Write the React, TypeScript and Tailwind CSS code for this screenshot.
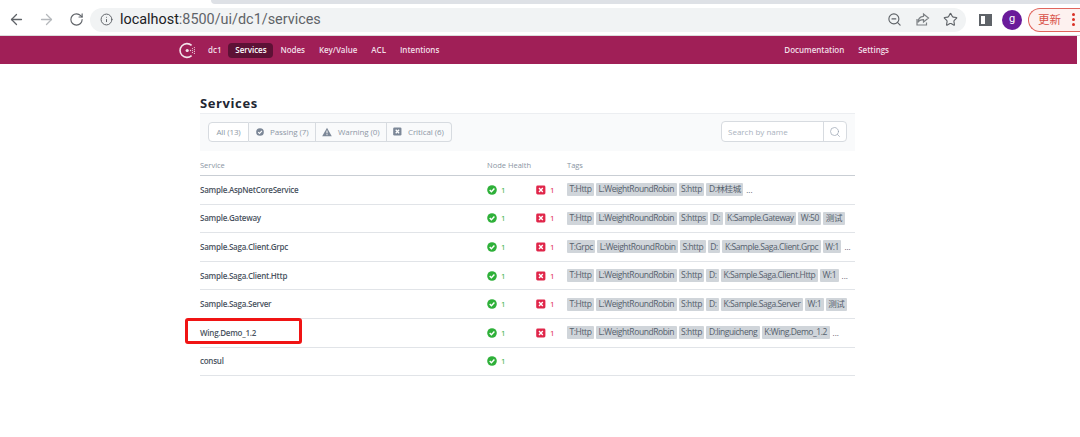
import { ArrowLeft, ArrowRight, RotateCw, Info, ZoomOut, Star, Search } from "lucide-react";

const font = { fontFamily: '"Open Sans","Noto Sans CJK SC",sans-serif' };

function PassIcon({ color = "#2eb039", size = 10 }: { color?: string; size?: number }) {
  return (
    <svg width={size} height={size} viewBox="0 0 10 10" className="shrink-0">
      <circle cx="5" cy="5" r="4.8" fill={color} />
      <path d="M2.7 5.1 4.4 6.8 7.4 3.6" fill="none" stroke="#fff" strokeWidth="1.4" />
    </svg>
  );
}

function CritIcon({ color = "#e0264a", size = 10 }: { color?: string; size?: number }) {
  return (
    <svg width={size} height={size} viewBox="0 0 10 10" className="shrink-0">
      <rect x="0.2" y="0.5" width="9.2" height="9" rx="1.4" fill={color} />
      <path d="M3 3 6.8 7M6.8 3 3 7" fill="none" stroke="#fff" strokeWidth="1.4" />
    </svg>
  );
}

function WarnIcon() {
  return (
    <svg width="10" height="10" viewBox="0 0 10 10" className="shrink-0">
      <path d="M5 .8 9.8 9.2H.2Z" fill="#7c8797" />
      <path d="M5 3.6V6.4M5 7.2V8.2" stroke="#fff" strokeWidth="1" />
    </svg>
  );
}

function Logo() {
  return (
    <svg width="17" height="17" viewBox="0 0 17 17" className="shrink-0">
      <path d="M12.6 3.4A6.9 6.9 0 1 0 12.6 13.6" fill="none" stroke="#f3e3ea" strokeWidth="1.6" />
      <circle cx="8.2" cy="8.5" r="1.6" fill="#f3e3ea" />
      <g fill="#e6c6d4">
        <circle cx="11.5" cy="8.5" r=".7" />
        <circle cx="13.5" cy="6.6" r=".6" />
        <circle cx="13.5" cy="8.5" r=".6" />
        <circle cx="13.5" cy="10.4" r=".6" />
        <circle cx="15.4" cy="5.6" r=".6" />
        <circle cx="15.4" cy="7.6" r=".6" />
        <circle cx="15.4" cy="9.4" r=".6" />
        <circle cx="15.4" cy="11.4" r=".6" />
      </g>
    </svg>
  );
}

const rows: { name: string; crit: boolean; tags: string[]; more?: boolean }[] = [
  { name: "Sample.AspNetCoreService", crit: true, tags: ["T:Http", "L:WeightRoundRobin", "S:http", "D:林桂城"], more: true },
  { name: "Sample.Gateway", crit: true, tags: ["T:Http", "L:WeightRoundRobin", "S:https", "D:", "K:Sample.Gateway", "W:50", "测试"] },
  { name: "Sample.Saga.Client.Grpc", crit: true, tags: ["T:Grpc", "L:WeightRoundRobin", "S:http", "D:", "K:Sample.Saga.Client.Grpc", "W:1"], more: true },
  { name: "Sample.Saga.Client.Http", crit: true, tags: ["T:Http", "L:WeightRoundRobin", "S:http", "D:", "K:Sample.Saga.Client.Http", "W:1"], more: true },
  { name: "Sample.Saga.Server", crit: true, tags: ["T:Http", "L:WeightRoundRobin", "S:http", "D:", "K:Sample.Saga.Server", "W:1", "测试"] },
  { name: "Wing.Demo_1.2", crit: true, tags: ["T:Http", "L:WeightRoundRobin", "S:http", "D:linguicheng", "K:Wing.Demo_1.2"], more: true },
  { name: "consul", crit: false, tags: [] },
];

function Chrome() {
  return (
    <div className="relative h-9 pt-1 bg-white border-b border-[#dcdcdc] flex items-center text-[#5f6368]">
      <div className="absolute top-0 left-[211px] right-0 h-1 bg-[#dee1e6] rounded-bl-md" />
      <div className="flex items-center gap-[13px] pl-[8px] w-[90px] shrink-0">
        <ArrowLeft size={17} strokeWidth={1.8} />
        <ArrowRight size={17} strokeWidth={1.8} className="text-[#b5b8bc]" />
        <RotateCw size={15} strokeWidth={1.8} className="ml-[1px]" />
      </div>
      <div className="w-[876px] h-6 rounded-full bg-[#f1f3f4] flex items-center pl-[10px] pr-[8px] shrink-0">
        <Info size={13} strokeWidth={1.8} />
        <span className="ml-[7px] text-[14.4px] text-[#5f6368]" style={{ fontFamily: '"Roboto",sans-serif' }}>
          <span className="text-[#202124]">localhost</span>:8500/ui/dc1/services
        </span>
        <div className="ml-auto flex items-center gap-[13px]">
          <ZoomOut size={15} strokeWidth={1.8} />
          <svg width="15" height="15" viewBox="0 0 15 15" fill="none" stroke="#7c8084" strokeWidth="1.2">
            <path d="M8.5 2 13.5 6 8.5 10V7.6C5.5 7.6 3.8 8.6 2.8 10.6 3 7 5 4.6 8.5 4.3Z" />
            <path d="M2 7V13H11.5V10.5" />
          </svg>
          <Star size={15} strokeWidth={1.8} />
        </div>
      </div>
      <div className="ml-[13px] w-[13px] h-[12px] border-2 border-[#5f6368] flex justify-end shrink-0">
        <div className="w-[5px] h-full bg-[#5f6368]" />
      </div>
      <div className="ml-[10px] w-5 h-5 rounded-full bg-[#6a1b9a] text-white text-[11px] flex items-center justify-center shrink-0" style={{ fontFamily: '"Roboto",sans-serif' }}>
        g
      </div>
      <div className="ml-[6px] w-[60px] h-6 shrink-0 rounded-l-full border border-r-0 border-[#e0655c] bg-[#fdf1ef] flex items-center pl-[9px]">
        <span className="text-[11.5px] text-[#d9534a]" style={{ fontFamily: '"Noto Sans CJK SC",sans-serif' }}>更新</span>
        <span className="ml-[11px] flex flex-col gap-[2px]">
          <i className="block w-[3px] h-[3px] rounded-full bg-[#d93025]" />
          <i className="block w-[3px] h-[3px] rounded-full bg-[#d93025]" />
          <i className="block w-[3px] h-[3px] rounded-full bg-[#d93025]" />
        </span>
      </div>
    </div>
  );
}

function Nav() {
  const item = "text-[8px] font-semibold tracking-[-0.03px] text-[#f1dfe7]";
  return (
    <div className="h-7 w-[1077px] bg-[#a01f57] flex items-center pl-[179px] pr-[188px]">
      <Logo />
      <span className={`${item} ml-[12px]`}>dc1</span>
      <span className={`${item} ml-[7px] h-[15px] w-[45px] flex items-center justify-center rounded-sm bg-[#5d1135] text-white`}>Services</span>
      <span className={`${item} ml-[7px]`}>Nodes</span>
      <span className={`${item} ml-[14px]`}>Key/Value</span>
      <span className={`${item} ml-[14px]`}>ACL</span>
      <span className={`${item} ml-[14px]`}>Intentions</span>
      <span className={`${item} ml-auto`}>Documentation</span>
      <span className={`${item} ml-[14px]`}>Settings</span>
    </div>
  );
}

function FilterBar() {
  const seg = "h-[20px] flex items-center gap-[6px] border border-[#d7dbe0] text-[8px] tracking-[-0.1px] text-[#8e98a6]";
  return (
    <div className="h-[38px] pb-[2px] bg-[#f9fafb] border-t border-[#eceef1] flex items-center px-[8px]">
      <div className="flex">
        <span className={`${seg} w-[41px] justify-center rounded-l-sm bg-white text-[#7c8797]`}>All (13)</span>
        <span className={`${seg} w-[67px] pl-[7px] border-l-0`}><PassIcon color="#7c8797" size={8} />Passing (7)</span>
        <span className={`${seg} w-[71px] pl-[6px] border-l-0`}><WarnIcon />Warning (0)</span>
        <span className={`${seg} w-[65px] pl-[6px] border-l-0 rounded-r-sm`}><CritIcon color="#7c8797" size={9} />Critical (6)</span>
      </div>
      <div className="ml-auto flex h-[21px] w-[126px] bg-white border border-[#d7dbe0] rounded-sm">
        <span className="flex-1 text-[8px] text-[#a9b2bd] flex items-center pl-[6px]">Search by name</span>
        <span className="w-[23px] border-l border-[#d7dbe0] flex items-center justify-center">
          <Search size={12} strokeWidth={1.4} className="text-[#9aa4b1]" />
        </span>
      </div>
    </div>
  );
}

function Row({ r }: { r: (typeof rows)[number] }) {
  return (
    <div className="h-[28.6px] shrink-0 border-b border-[#e1e4e8] flex items-center">
      <div className="w-[287px] shrink-0 text-[8px] font-semibold tracking-[-0.25px] text-[#4a5360]">{r.name}</div>
      <div className="w-[49px] shrink-0 flex items-center gap-[4px] text-[8px] text-[#2eb039]">
        <PassIcon />1
      </div>
      <div className="w-[31px] shrink-0 flex items-center gap-[4px] text-[8px] text-[#e0264a]">
        {r.crit && (<><CritIcon />1</>)}
      </div>
      <div className="flex items-center gap-[2px] min-w-0 whitespace-nowrap">
        {r.tags.map((t, i) => (
          <span key={i} className="h-[13px] px-[2.5px] flex items-center rounded-[1px] bg-[#d0d5da] text-[8.5px] tracking-[-0.42px] text-[#55606c]">{t}</span>
        ))}
        {r.more && <span className="ml-[1px] text-[8px] text-[#4f5a66]">...</span>}
      </div>
    </div>
  );
}

export default function App() {
  return (
    <div className="relative w-[1080px] h-[437px] overflow-hidden bg-white" style={font}>
      <Chrome />
      <Nav />
      <main className="w-[655px] ml-[200px] pt-[30px]">
        <h1 className="text-[13px] leading-[19px] font-bold tracking-[0.6px] text-[#1f2733]">Services</h1>
        <FilterBar />
        <div className="h-[25px] pt-[6px] border-b border-[#c9ced4] flex items-center text-[7.5px] text-[#8a95a3]">
          <div className="w-[287px] shrink-0">Service</div>
          <div className="w-[80px] shrink-0">Node Health</div>
          <div>Tags</div>
        </div>
        {rows.map((r) => (
          <Row key={r.name} r={r} />
        ))}
      </main>
      <div className="absolute left-[185px] top-[318px] w-[117px] h-[26px] border-[3px] border-[#f01414] rounded-[3px]" />
    </div>
  );
}
